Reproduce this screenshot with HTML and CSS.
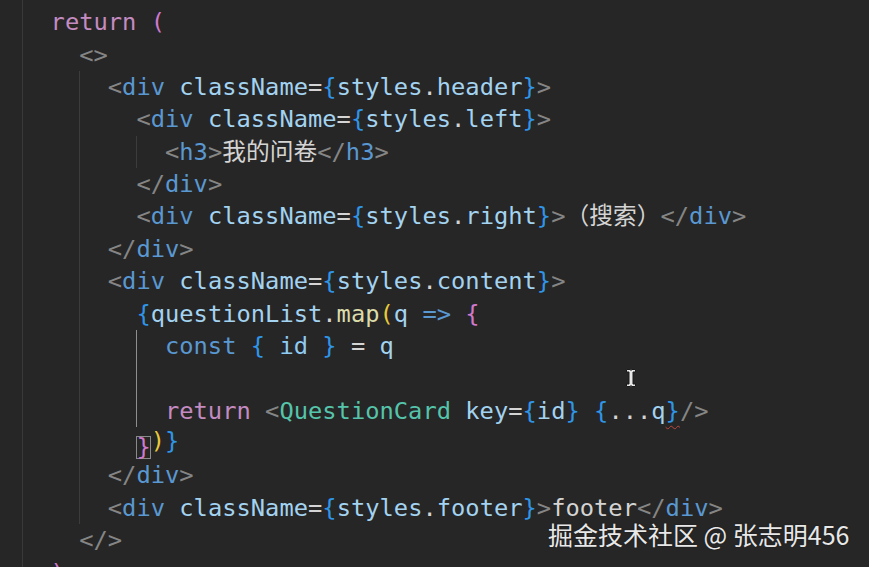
FILE: index.html
```html
<!DOCTYPE html>
<html lang="zh">
<head>
<meta charset="utf-8">
<title>editor</title>
<link rel="stylesheet" href="styles.css">
</head>
<body>
<div class="editor">
  <div class="code">
    <div class="line"><span class="ind"></span><span class="tx"><span class="kw">return</span> <span class="pk">(</span></span></div>
    <div class="line"><span class="ind"></span><span class="ind"></span><span class="tx"><span class="pn">&lt;&gt;</span></span></div>
    <div class="line"><span class="ind"></span><span class="ind"></span><span class="ind g"></span><span class="tx"><span class="pn">&lt;</span><span class="tg">div</span> <span class="at">className</span><span class="op">=</span><span class="b3">{</span><span class="vr">styles</span><span class="op">.</span><span class="vr">header</span><span class="b3">}</span><span class="pn">&gt;</span></span></div>
    <div class="line"><span class="ind"></span><span class="ind"></span><span class="ind g"></span><span class="ind"></span><span class="tx"><span class="pn">&lt;</span><span class="tg">div</span> <span class="at">className</span><span class="op">=</span><span class="b3">{</span><span class="vr">styles</span><span class="op">.</span><span class="vr">left</span><span class="b3">}</span><span class="pn">&gt;</span></span></div>
    <div class="line"><span class="ind"></span><span class="ind"></span><span class="ind g"></span><span class="ind"></span><span class="ind g"></span><span class="tx"><span class="pn">&lt;</span><span class="tg">h3</span><span class="pn">&gt;</span>我的问卷<span class="pn">&lt;/</span><span class="tg">h3</span><span class="pn">&gt;</span></span></div>
    <div class="line"><span class="ind"></span><span class="ind"></span><span class="ind g"></span><span class="ind"></span><span class="tx"><span class="pn">&lt;/</span><span class="tg">div</span><span class="pn">&gt;</span></span></div>
    <div class="line"><span class="ind"></span><span class="ind"></span><span class="ind g"></span><span class="ind"></span><span class="tx"><span class="pn">&lt;</span><span class="tg">div</span> <span class="at">className</span><span class="op">=</span><span class="b3">{</span><span class="vr">styles</span><span class="op">.</span><span class="vr">right</span><span class="b3">}</span><span class="pn">&gt;</span>（搜索）<span class="pn">&lt;/</span><span class="tg">div</span><span class="pn">&gt;</span></span></div>
    <div class="line"><span class="ind"></span><span class="ind"></span><span class="ind g"></span><span class="tx"><span class="pn">&lt;/</span><span class="tg">div</span><span class="pn">&gt;</span></span></div>
    <div class="line"><span class="ind"></span><span class="ind"></span><span class="ind g"></span><span class="tx"><span class="pn">&lt;</span><span class="tg">div</span> <span class="at">className</span><span class="op">=</span><span class="b3">{</span><span class="vr">styles</span><span class="op">.</span><span class="vr">content</span><span class="b3">}</span><span class="pn">&gt;</span></span></div>
    <div class="line"><span class="ind"></span><span class="ind"></span><span class="ind g"></span><span class="ind"></span><span class="tx"><span class="b3">{</span><span class="vr">questionList</span><span class="op">.</span><span class="fn">map</span><span class="by">(</span><span class="vr">q</span> <span class="tg">=&gt;</span> <span class="pk">{</span></span></div>
    <div class="line"><span class="ind"></span><span class="ind"></span><span class="ind g"></span><span class="ind"></span><span class="ind a"></span><span class="tx"><span class="tg">const</span> <span class="b3">{</span> <span class="cv">id</span> <span class="b3">}</span> <span class="op">=</span> <span class="vr">q</span></span></div>
    <div class="line"><span class="ind"></span><span class="ind"></span><span class="ind g"></span><span class="ind"></span><span class="ind a"></span><span class="tx"></span></div>
    <div class="line"><span class="ind"></span><span class="ind"></span><span class="ind g"></span><span class="ind"></span><span class="ind a"></span><span class="tx"><span class="kw">return</span> <span class="pn">&lt;</span><span class="cn">QuestionCard</span> <span class="at">key</span><span class="op">=</span><span class="b3">{</span><span class="vr">id</span><span class="b3">}</span> <span class="b3">{</span><span class="op">...</span><span class="vr">q</span><span class="b3 err">}</span><span class="pn">/&gt;</span></span></div>
    <div class="line"><span class="ind"></span><span class="ind"></span><span class="ind g"></span><span class="ind"></span><span class="tx"><span class="pk match">}</span><span class="by">)</span><span class="b3">}</span></span></div>
    <div class="line"><span class="ind"></span><span class="ind"></span><span class="ind g"></span><span class="tx"><span class="pn">&lt;/</span><span class="tg">div</span><span class="pn">&gt;</span></span></div>
    <div class="line"><span class="ind"></span><span class="ind"></span><span class="ind g"></span><span class="tx"><span class="pn">&lt;</span><span class="tg">div</span> <span class="at">className</span><span class="op">=</span><span class="b3">{</span><span class="vr">styles</span><span class="op">.</span><span class="vr">footer</span><span class="b3">}</span><span class="pn">&gt;</span>footer<span class="pn">&lt;/</span><span class="tg">div</span><span class="pn">&gt;</span></span></div>
    <div class="line"><span class="ind"></span><span class="ind"></span><span class="tx"><span class="pn">&lt;/&gt;</span></span></div>
    <div class="line"><span class="ind"></span><span class="tx"><span class="pk">)</span></span></div>
  </div>
  <svg class="ibeam" width="12" height="20" viewBox="0 0 12 20"><path d="M1.5 1.5h3.5l1 1 1-1h3.5v2.5H8v12h2.5v2.5H7l-1-1-1 1H1.5V16H4V4H1.5z" fill="#e6e6e6" stroke="#1a1a1a" stroke-width="1"/></svg>
  <div class="wm">掘金技术社区 @ 张志明456</div>
</div>
</body>
</html>
```
FILE: styles.css
```css
html, body {
  margin: 0;
  padding: 0;
  background: #262626;
  overflow: hidden;
}

.editor {
  position: relative;
  width: 869px;
  height: 567px;
  overflow: hidden;
  background: #262626;
  padding-left: 22px;
  box-sizing: border-box;
}

.code {
  height: 100%;
  padding-top: 6px;
  box-sizing: border-box;
  box-shadow: inset 1px 0 #393939;
  font-family: "DejaVu Sans Mono", "Noto Sans CJK SC", monospace;
  font-size: 23.75px;
  color: #d4d4d4;
}

.line {
  display: flex;
  height: 32.375px;
}

.ind {
  flex: none;
  width: 2ch;
}

.g {
  box-shadow: inset 1px 0 #3c3c3c;
}

.a {
  box-shadow: inset 1px 0 #8e8e8e;
}

.tx {
  align-self: center;
  white-space: pre;
  line-height: 26px;
}

.kw { color: #c48bc1; }
.pk { color: #cf78cc; }
.pn { color: #858585; }
.tg { color: #5a98d2; }
.at { color: #a3d3f0; }
.vr { color: #a3d3f0; }
.cv { color: #8fcaf3; }
.op { color: #d4d4d4; }
.b3 { color: #2f95e6; }
.fn { color: #dcdcaa; }
.by { color: #e8c93a; }
.cn { color: #55c4ab; }

.err {
  text-decoration: underline wavy #b9473f;
  text-decoration-thickness: 1px;
  text-underline-offset: 6px;
}

.match {
  display: inline-block;
  height: 23px;
  line-height: 23px;
  vertical-align: -6px;
  box-shadow: inset 0 0 0 1px #8a8a8a;
}

.ibeam {
  position: absolute;
  left: 625px;
  top: 368px;
}

.wm {
  position: absolute;
  left: 548px;
  top: 523px;
  font-family: "Noto Sans CJK SC", sans-serif;
  font-size: 25px;
  line-height: 22px;
  color: #e8e8e8;
  white-space: nowrap;
  text-shadow: 0 0 2px rgba(0, 0, 0, 0.4);
}
```
